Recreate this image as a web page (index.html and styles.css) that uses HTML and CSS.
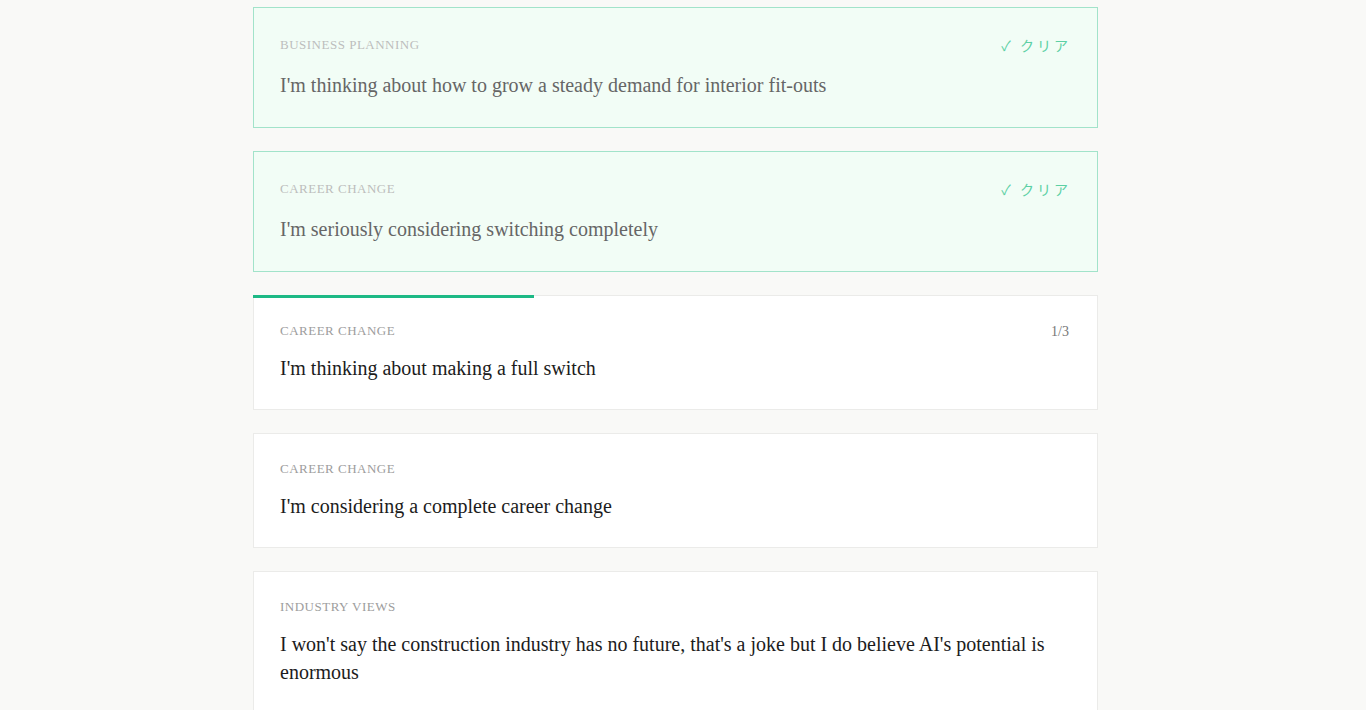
FILE: index.html
```html
<!DOCTYPE html>
<html lang="ja">
<head>
<meta charset="utf-8">
<title>Prompts</title>
<link rel="stylesheet" href="styles.css">
</head>
<body>
<main class="list">
  <section class="card card--done">
    <div class="card__head">
      <span class="card__label">Business Planning</span>
      <span class="card__clear">✓ クリア</span>
    </div>
    <p class="card__text">I'm thinking about how to grow a steady demand for interior fit-outs</p>
  </section>
  <section class="card card--done">
    <div class="card__head">
      <span class="card__label">Career Change</span>
      <span class="card__clear">✓ クリア</span>
    </div>
    <p class="card__text">I'm seriously considering switching completely</p>
  </section>
  <section class="card card--active">
    <div class="card__progress"><div class="card__bar" style="width:33.3%"></div></div>
    <div class="card__head">
      <span class="card__label">Career Change</span>
      <span class="card__count">1/3</span>
    </div>
    <p class="card__text">I'm thinking about making a full switch</p>
  </section>
  <section class="card">
    <div class="card__head">
      <span class="card__label">Career Change</span>
    </div>
    <p class="card__text">I'm considering a complete career change</p>
  </section>
  <section class="card">
    <div class="card__head">
      <span class="card__label">Industry Views</span>
    </div>
    <p class="card__text">I won't say the construction industry has no future, that's a joke but I do believe AI's potential is enormous</p>
  </section>
</main>
</body>
</html>
```

FILE: styles.css
```css
html, body {
  margin: 0;
  padding: 0;
  background: #f9f9f7;
}
body {
  font-family: "Liberation Serif", "Noto Sans CJK JP", serif;
  color: #1f1f1f;
  overflow: hidden;
  padding-right: 15px;
}
.list {
  width: 845px;
  margin: 7px auto 0;
  display: flex;
  flex-direction: column;
  gap: 23px;
}
.card {
  position: relative;
  background: #ffffff;
  border: 1px solid #ebebe9;
  padding: 26px 26px 27px;
}
.card--done {
  background: #f2fdf6;
  border: 1px solid #a2e3ca;
  padding-bottom: 28px;
}
.card__progress {
  position: absolute;
  top: -1px;
  left: -1px;
  right: -1px;
  height: 3px;
}
.card__bar {
  height: 100%;
  background: #1db985;
}
.card__head {
  display: flex;
  justify-content: space-between;
  align-items: center;
  height: 18px;
  margin-bottom: 14px;
}
.card--done .card__head {
  height: 22px;
  margin-bottom: 15px;
}
.card__label {
  font-size: 13px;
  letter-spacing: 0.5px;
  text-transform: uppercase;
  color: #9d9d9d;
  line-height: 18px;
}
.card--done .card__label {
  color: #bdbdbd;
}
.card__clear {
  font-family: "Noto Sans CJK JP", sans-serif;
  font-size: 14px;
  letter-spacing: 3px;
  color: #5cd0a4;
}
.card__count {
  font-size: 14px;
  color: #777;
  margin-right: 2px;
  margin-top: 2px;
}
.card__text {
  margin: 0;
  font-size: 20px;
  line-height: 28px;
  color: #1c1c1c;
}
.card--done .card__text {
  color: #666;
}
```
